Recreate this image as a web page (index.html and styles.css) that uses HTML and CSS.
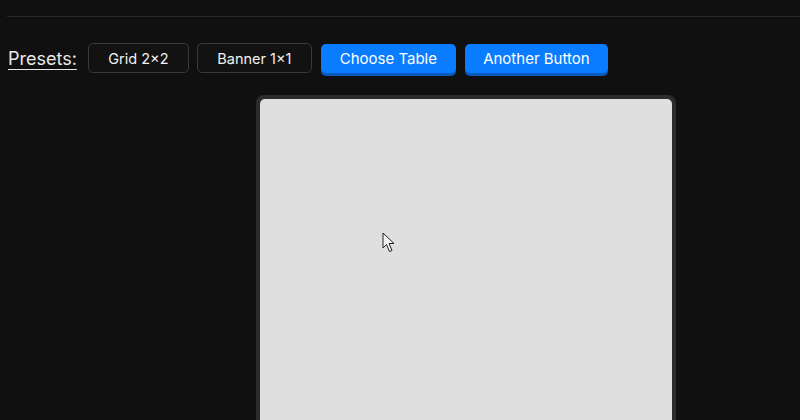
FILE: index.html
```html
<!DOCTYPE html>
<html>
<head>
<meta charset="utf-8">
<link rel="stylesheet" href="styles.css">
</head>
<body>
<div class="page">
  <div class="rule"></div>
  <div class="presets">
    <span class="label">Presets:</span>
    <button class="btn ghost g1">Grid 2×2</button>
    <button class="btn ghost g2">Banner 1×1</button>
    <button class="btn primary p1">Choose Table</button>
    <button class="btn primary p2">Another Button</button>
  </div>
  <div class="card">
    <div class="canvas">
      <svg class="cursor" width="14" height="22" viewBox="0 0 14 22">
        <path d="M1 1 L1 16 L4.5 12.5 L7.5 19.5 L10 18.5 L7 11.5 L12 11.5 Z" fill="#f4f4f4" stroke="#222" stroke-width="1" stroke-linejoin="round"/>
      </svg>
    </div>
  </div>
</div>
</body>
</html>
```
FILE: styles.css
```css
html, body {
  margin: 0;
  padding: 0;
  background: #0f100f;
  overflow: hidden;
}
.page {
  width: 800px;
  height: 420px;
  padding-top: 16px;
  box-sizing: border-box;
  font-family: Inter, "Noto Sans", sans-serif;
}
.rule {
  height: 1px;
  margin-left: 7px;
  background: #272827;
}
.presets {
  display: flex;
  align-items: flex-start;
  margin-top: 26px;
  padding-left: 8px;
}
.label {
  color: #e8e8e8;
  font-size: 18px;
  line-height: 22px;
  text-decoration: underline;
  text-underline-offset: 4px;
  margin-top: 5px;
  margin-right: 11px;
}
.btn {
  font-family: Inter, "Noto Sans", sans-serif;
  font-size: 14.5px;
  height: 30px;
  border-radius: 5px;
  padding: 0;
  margin-right: 8px;
  cursor: default;
}
.ghost {
  background: #111211;
  border: 1px solid #3a3a3a;
  color: #f2f2f2;
}
.g1 { width: 101px; }
.g2 { width: 115px; margin-right: 9px; }
.primary {
  background: #0a7cff;
  border: none;
  color: #fff;
  font-size: 15px;
  margin-top: 1px;
  height: 29px;
  box-shadow: 0 3px 0 #0a5bbd;
}
.p1 { width: 135px; margin-right: 9px; }
.p2 { width: 143px; }
.card {
  margin-top: 22px;
  margin-left: 256px;
  width: 420px;
  height: 340px;
  box-sizing: border-box;
  background: #2c2c2c;
  border-radius: 8px;
  padding: 4px;
}
.canvas {
  position: relative;
  height: 100%;
  background: #dfdfdf;
  border-radius: 5px 5px 0 0;
}
.cursor {
  position: absolute;
  left: 122px;
  top: 133px;
}
```
